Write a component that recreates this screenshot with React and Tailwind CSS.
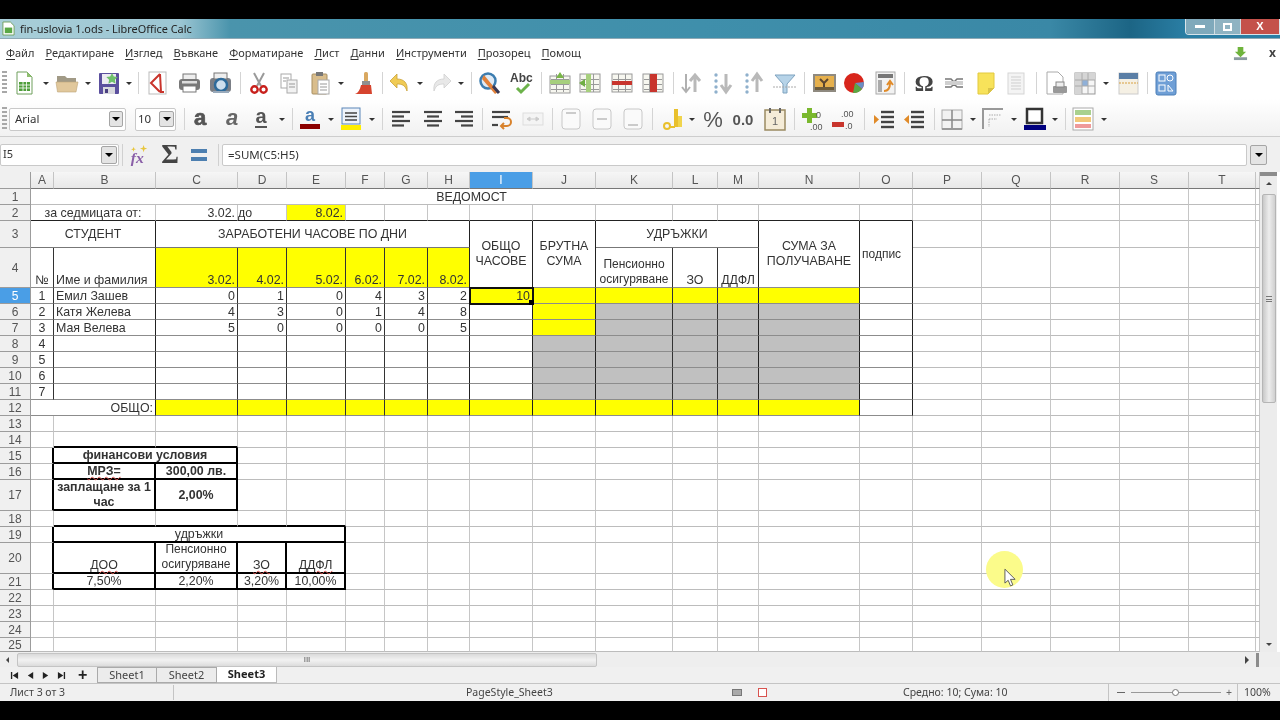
import React from "react";

const gridLines = (stroke = "#9a9a9a") => (
  <path d="M3 8.5h18M3 13.5h18M3 18.5h18M8.5 3v18M15.5 3v18" stroke={stroke} strokeWidth="1" fill="none" />
);

const lines = (ys, x1, x2, color = "#444", w = 2.2) => (
  <>
    {ys.map((y, i) => (
      <line key={i} x1={x1[i] ?? x1[0]} x2={x2[i] ?? x2[0]} y1={y} y2={y} stroke={color} strokeWidth={w} />
    ))}
  </>
);

const icons = {
  doc: (
    <>
      <path d="M5 1h10l5 5v17H5z" fill="#fff" stroke="#6f9f5d" />
      <path d="M15 1v5h5z" fill="#8fbf6f" />
      <rect x="7" y="11" width="11" height="9" fill="#4f9e3a" />
      <path d="M7 14h11M7 17h11M11 11v9M14.5 11v9" stroke="#fff" strokeWidth=".8" />
    </>
  ),
  open: (
    <>
      <path d="M2 5h8l2 2h9v5H2z" fill="#a19a86" />
      <path d="M1 11h22l-2 10H2.500z" fill="#e1c89c" stroke="#bda578" strokeWidth=".6" />
    </>
  ),
  save: (
    <>
      <rect x="3" y="2" width="20" height="21" rx="1" fill="#5b4f9e" />
      <rect x="6" y="3" width="14" height="10" fill="#eceaf2" />
      <path d="M16 2l1.800 3.600 3.900.5-2.800 2.700.7 3.900-3.600-1.900-3.600 1.900.7-3.900-2.800-2.700 3.900-.5z" fill="#6fc16b" />
      <rect x="7" y="16" width="12" height="7" fill="#d8d8de" />
      <rect x="9" y="18" width="3" height="4" fill="#4a4080" />
    </>
  ),
  pdf: (
    <>
      <rect x="4" y="1" width="17" height="22" fill="#fff" stroke="#bbb" />
      <path d="M15 3L6 12l9 9M15 3l1 18M15 21h4" stroke="#c9342c" strokeWidth="2" fill="none" />
    </>
  ),
  print: (
    <>
      <rect x="6" y="3" width="13" height="6" fill="#eee" stroke="#777" />
      <rect x="2" y="8" width="21" height="11" rx="3" fill="#787878" />
      <rect x="5" y="10" width="15" height="2.500" fill="#ddd" />
      <rect x="6" y="15" width="13" height="6" fill="#fff" stroke="#777" />
    </>
  ),
  preview: (
    <>
      <rect x="2" y="7" width="21" height="14" rx="3" fill="#7b7f86" />
      <rect x="6" y="2" width="13" height="6" fill="#eee" stroke="#777" />
      <circle cx="13" cy="14" r="6" fill="#cfe0ee" stroke="#2d6b9b" strokeWidth="2.500" />
      <rect x="5" y="20" width="16" height="2" fill="#9ab" />
    </>
  ),
  cut: (
    <>
      <path d="M7 2l7 13M17 2L10 15" stroke="#9a9a9a" strokeWidth="2" />
      <circle cx="7.500" cy="18.500" r="3.200" fill="none" stroke="#c8201c" strokeWidth="2.400" />
      <circle cx="16.500" cy="18.500" r="3.200" fill="none" stroke="#c8201c" strokeWidth="2.400" />
    </>
  ),
  copy: (
    <>
      <rect x="4" y="3" width="10" height="14" fill="#fff" stroke="#aaa" />
      <rect x="10" y="9" width="10" height="13" fill="#f2f2f2" stroke="#aaa" />
      <path d="M6 7h6M6 10h3M12 13h6M12 16h6" stroke="#999" />
    </>
  ),
  paste: (
    <>
      <rect x="4" y="3" width="15" height="20" rx="1" fill="#d9bd8c" stroke="#a88f62" />
      <rect x="8" y="1" width="7" height="4" fill="#777" />
      <rect x="10" y="9" width="11" height="14" fill="#fff" stroke="#aaa" />
      <path d="M12 13h7M12 16h7M12 19h7" stroke="#999" />
    </>
  ),
  brush: (
    <>
      <rect x="13" y="1" width="4" height="10" rx="1.500" fill="#d9a860" />
      <rect x="11" y="10" width="8" height="4" fill="#8f8f8f" />
      <path d="M10 14h10l1 9H4c3-1 5-4 6-9z" fill="#d6442e" />
    </>
  ),
  undo: (
    <path d="M9 3L2 10l7 7v-4c5 0 8 1 10 7 1-8-3-12-10-12z" fill="#f0cb55" stroke="#c9a23a" strokeWidth=".8" />
  ),
  redo: (
    <path d="M15 3l7 7-7 7v-4c-5 0-8 1-10 7-1-8 3-12 10-12z" fill="#e8e8e8" stroke="#cfcfcf" strokeWidth=".8" />
  ),
  find: (
    <>
      <circle cx="10" cy="10" r="7.500" fill="#dfeaf5" stroke="#3c7db0" strokeWidth="2.500" />
      <path d="M6 4l14 17-3 2L4 8z" fill="#e2813a" />
      <path d="M15 15l6 7" stroke="#3a3a55" strokeWidth="3" />
    </>
  ),
  abc: (
    <>
      <text x="0" y="11" fontSize="12" fontWeight="700" fontFamily="Liberation Sans, sans-serif" fill="#444">Abc</text>
      <path d="M7 17l4 4 8-8" stroke="#6cb24a" strokeWidth="3" fill="none" />
    </>
  ),
  insRow: (
    <>
      <rect x="2" y="5" width="20" height="17" fill="#f7f7f0" stroke="#9a9a9a" />
      {gridLines()}
      <path d="M8 7l4-6 4 6z" fill="#7ab648" />
      <rect x="2" y="9" width="20" height="4" fill="#a6cf7c" />
    </>
  ),
  insCol: (
    <>
      <rect x="2" y="3" width="20" height="18" fill="#f7f7f0" stroke="#9a9a9a" />
      {gridLines()}
      <rect x="8" y="3" width="5" height="18" fill="#a6cf7c" />
      <path d="M1 12l6-4v8z" fill="#6fae44" />
    </>
  ),
  delRow: (
    <>
      <rect x="2" y="3" width="20" height="18" fill="#f7f7f0" stroke="#9a9a9a" />
      {gridLines()}
      <rect x="2" y="10" width="20" height="4" fill="#c8352d" />
    </>
  ),
  delCol: (
    <>
      <rect x="2" y="3" width="20" height="18" fill="#f7f7f0" stroke="#9a9a9a" />
      {gridLines()}
      <rect x="9" y="3" width="7" height="18" fill="#c8352d" />
    </>
  ),
  sort: (
    <>
      <path d="M7 3v17M3 16l4 5 4-5" stroke="#b0b0b0" strokeWidth="2" fill="none" />
      <path d="M16 21V5M11 10l5-6 5 6" stroke="#b9b9b9" strokeWidth="3" fill="none" />
    </>
  ),
  sortDesc: (
    <>
      <circle cx="5" cy="4" r="1.700" fill="#8fb0cc" />
      <circle cx="5" cy="10" r="1.700" fill="#8fb0cc" />
      <circle cx="5" cy="16" r="1.700" fill="#8fb0cc" />
      <circle cx="5" cy="21" r="1.700" fill="#8fb0cc" />
      <path d="M15 3v16M10 14l5 7 5-7" stroke="#b9b9b9" strokeWidth="3" fill="none" />
    </>
  ),
  sortAsc: (
    <>
      <circle cx="5" cy="4" r="1.700" fill="#8fb0cc" />
      <circle cx="5" cy="10" r="1.700" fill="#8fb0cc" />
      <circle cx="5" cy="16" r="1.700" fill="#8fb0cc" />
      <circle cx="5" cy="21" r="1.700" fill="#8fb0cc" />
      <path d="M15 21V5M10 10l5-7 5 7" stroke="#b9b9b9" strokeWidth="3" fill="none" />
    </>
  ),
  filter: (
    <>
      <path d="M2 4h20l-8 9v9h-4v-9z" fill="#b6d3e8" stroke="#7fa3bf" />
      <path d="M0 16h24" stroke="#aaa" strokeDasharray="2 1" />
    </>
  ),
  image: (
    <>
      <rect x="1" y="3" width="23" height="18" fill="#8f8a80" />
      <rect x="3" y="5" width="19" height="14" fill="#e6b04c" />
      <path d="M12 19v-7l-4-4M12 12l4-4" stroke="#5b4630" strokeWidth="2" fill="none" />
      <rect x="3" y="16" width="19" height="3" fill="#6e5c3a" />
    </>
  ),
  chart: (
    <>
      <circle cx="12" cy="12" r="10" fill="#d8261c" />
      <path d="M13 12l9-1a10 10 0 0 1-2 7z" fill="#6b8fc4" />
      <path d="M13 12l7 6a10 10 0 0 1-9 4z" fill="#5aa845" />
    </>
  ),
  pivot: (
    <>
      <rect x="3" y="1" width="19" height="22" fill="#f2f2f2" stroke="#aaa" />
      <rect x="5" y="3" width="15" height="4" fill="#777" />
      <rect x="5" y="9" width="4" height="12" fill="#aaa" />
      <path d="M11 20c4 0 6-3 6-8M14 14l3-4 3 4" stroke="#e08a28" strokeWidth="2" fill="none" />
    </>
  ),
  omega: (
    <text x="12" y="20" textAnchor="middle" fontSize="24" fontWeight="700" fontFamily="Liberation Serif, serif" fill="#444">Ω</text>
  ),
  link: (
    <>
      <path d="M3 8h6l3 3 3-3h6M3 16h6l3-3 3 3h6" stroke="#777" strokeWidth="1.500" fill="none" />
      <rect x="3" y="10" width="18" height="4" fill="#cfcfcf" />
    </>
  ),
  note: (
    <>
      <path d="M4 2h16v15l-6 6H4z" fill="#f7e25a" stroke="#e2c93f" />
      <path d="M14 23v-6h6z" fill="#d8c34a" />
    </>
  ),
  header: (
    <>
      <rect x="4" y="2" width="16" height="21" fill="#f4f4f4" stroke="#d5d5d5" />
      <path d="M7 6h10M7 9h10M7 12h10M7 15h10M7 18h10" stroke="#cfcfcf" />
    </>
  ),
  printPage: (
    <>
      <path d="M3 1h11l5 5v17H3z" fill="#fff" stroke="#aaa" />
      <rect x="9" y="15" width="14" height="7" rx="1" fill="#999" />
      <rect x="12" y="11" width="8" height="5" fill="#eee" stroke="#888" />
    </>
  ),
  freeze: (
    <>
      <rect x="2" y="2" width="20" height="21" fill="#f6f6f6" stroke="#999" />
      <rect x="2" y="2" width="7" height="21" fill="#d5d5d5" />
      <rect x="2" y="2" width="20" height="7" fill="#d5d5d5" />
      <rect x="9" y="9" width="6" height="6" fill="#8fb0d8" />
      <path d="M9 2v21M15 2v21M2 9h20M2 15h20" stroke="#aaa" />
    </>
  ),
  hdrBar: (
    <>
      <rect x="3" y="2" width="19" height="21" fill="#f5f0e4" stroke="#ccc" />
      <rect x="3" y="2" width="19" height="6" fill="#5b7fa6" />
      <path d="M3 12h19" stroke="#d8a040" strokeDasharray="2 1" />
    </>
  ),
  sidebar: (
    <>
      <rect x="2" y="1" width="20" height="23" rx="2" fill="#6f9fd6" stroke="#4c7fb8" />
      <rect x="5" y="4" width="6" height="6" fill="none" stroke="#fff" />
      <circle cx="16" cy="7" r="3" fill="none" stroke="#fff" />
      <rect x="5" y="14" width="6" height="6" fill="none" stroke="#fff" />
      <path d="M14 14l5 6h-5z" fill="none" stroke="#fff" />
    </>
  ),
  bold: (
    <text x="12" y="18" textAnchor="middle" fontSize="22" fontWeight="700" fontFamily="Liberation Sans, sans-serif" fill="#555" stroke="#555" strokeWidth=".7">a</text>
  ),
  italic: (
    <text x="12" y="18" textAnchor="middle" fontSize="22" fontWeight="700" fontStyle="italic" fontFamily="Liberation Sans, sans-serif" fill="#666">a</text>
  ),
  underline: (
    <>
      <text x="12" y="16" textAnchor="middle" fontSize="20" fontWeight="700" fontFamily="Liberation Sans, sans-serif" fill="#555">a</text>
      <rect x="6" y="19" width="12" height="2" fill="#555" />
    </>
  ),
  fontColor: (
    <>
      <text x="12" y="14" textAnchor="middle" fontSize="18" fontWeight="700" fontFamily="Liberation Sans, sans-serif" fill="#4a7fb5">a</text>
      <rect x="2" y="17" width="20" height="5" fill="#8b0000" />
    </>
  ),
  bgColor: (
    <>
      <rect x="3" y="1" width="18" height="16" fill="#eef3fa" stroke="#5a86b8" />
      <path d="M6 6h12M6 9.500h12M6 13h12" stroke="#444" strokeWidth="1.500" />
      <rect x="2" y="18" width="20" height="5" fill="#ffee00" />
    </>
  ),
  alignL: lines([5, 9.500, 14, 18.500], [3], [21, 15, 21, 15]),
  alignC: lines([5, 9.500, 14, 18.500], [3, 6, 3, 6], [21, 18, 21, 18]),
  alignR: lines([5, 9.500, 14, 18.500], [3, 9, 3, 9], [21]),
  wrap: (
    <>
      {lines([5, 10, 18], [3], [21, 19, 9])}
      <path d="M15 11h3a3.500 3.500 0 0 1 0 8h-5M15 16l-3 3 3 3" stroke="#d8822c" strokeWidth="2" fill="none" />
    </>
  ),
  merge: (
    <>
      <rect x="2" y="6" width="20" height="12" fill="#f4f4f4" stroke="#ddd" />
      <path d="M8 12h8M6 12l3-2v4zM18 12l-3-2v4z" stroke="#ccc" fill="#ccc" />
    </>
  ),
  vTop: (
    <>
      <rect x="3" y="2" width="18" height="20" rx="3" fill="#fafafa" stroke="#c8c8c8" />
      <path d="M7 6h10" stroke="#bbb" strokeWidth="1.500" />
    </>
  ),
  vMid: (
    <>
      <rect x="3" y="2" width="18" height="20" rx="3" fill="#fafafa" stroke="#c8c8c8" />
      <path d="M7 12h10" stroke="#bbb" strokeWidth="1.500" />
    </>
  ),
  vBot: (
    <>
      <rect x="3" y="2" width="18" height="20" rx="3" fill="#fafafa" stroke="#c8c8c8" />
      <path d="M7 18h10" stroke="#bbb" strokeWidth="1.500" />
    </>
  ),
  currency: (
    <>
      <rect x="13" y="2" width="4" height="18" fill="#e9c02c" />
      <rect x="17" y="9" width="4" height="11" fill="#f0d44c" />
      <circle cx="6" cy="19" r="3" fill="none" stroke="#e9c02c" strokeWidth="2" />
      <path d="M8 20h6" stroke="#e9c02c" strokeWidth="2" />
    </>
  ),
  pct: (
    <text x="12" y="20" textAnchor="middle" fontSize="22" fontFamily="Liberation Sans, sans-serif" fill="#555">%</text>
  ),
  num: (
    <text x="12" y="18" textAnchor="middle" fontSize="15" fontWeight="700" fontFamily="Liberation Sans, sans-serif" fill="#555">0.0</text>
  ),
  date: (
    <>
      <rect x="2" y="3" width="20" height="20" fill="#f5ecd8" stroke="#9a8a62" strokeWidth="1.500" />
      <rect x="6" y="1" width="2" height="5" fill="#666" />
      <rect x="16" y="1" width="2" height="5" fill="#666" />
      <text x="12" y="18" textAnchor="middle" fontSize="11" fontFamily="Liberation Sans, sans-serif" fill="#666">1</text>
    </>
  ),
  addDec: (
    <>
      <path d="M6 1h5v5h5v5h-5v5H6v-5H1V6h5z" fill="#7ab82e" />
      <text x="15" y="11" fontSize="9" fontFamily="Liberation Sans, sans-serif" fill="#555">0</text>
      <text x="9" y="23" fontSize="9" fontFamily="Liberation Sans, sans-serif" fill="#555">.00</text>
    </>
  ),
  delDec: (
    <>
      <text x="10" y="10" fontSize="9" fontFamily="Liberation Sans, sans-serif" fill="#555">.00</text>
      <rect x="1" y="15" width="12" height="5" fill="#c8352d" />
      <text x="14" y="22" fontSize="9" fontFamily="Liberation Sans, sans-serif" fill="#555">.0</text>
    </>
  ),
  indent: (
    <>
      {lines([5, 10, 15, 20], [9], [22], "#444", 2.400)}
      <path d="M2 8l5 4.500L2 17z" fill="#e08a28" />
    </>
  ),
  outdent: (
    <>
      {lines([5, 10, 15, 20], [9], [22], "#444", 2.400)}
      <path d="M7 8l-5 4.500L7 17z" fill="#e08a28" />
    </>
  ),
  borders: (
    <>
      <rect x="2" y="3" width="20" height="19" fill="#f2f2f2" stroke="#aaa" />
      <path d="M12 3v19M2 13h20" stroke="#888" strokeWidth="1.500" />
      <path d="M2 22h20" stroke="#999" strokeWidth="2" />
    </>
  ),
  bStyle: (
    <>
      <path d="M2 22V2h20" stroke="#999" strokeWidth="2" fill="none" />
      <path d="M8 8h12M8 12h8M8 12v8" stroke="#aaa" strokeDasharray="1.500 1" fill="none" />
    </>
  ),
  bColor: (
    <>
      <rect x="4" y="2" width="15" height="14" fill="#fff" stroke="#333" strokeWidth="2.500" />
      <rect x="1" y="18" width="22" height="5" fill="#00007f" />
    </>
  ),
  cond: (
    <>
      <rect x="2" y="1" width="20" height="22" fill="#fff" stroke="#aaa" />
      <rect x="4" y="3" width="16" height="5" fill="#a9d18e" />
      <rect x="4" y="10" width="16" height="5" fill="#f2c879" />
      <rect x="4" y="17" width="16" height="4" fill="#ef9a9a" />
    </>
  ),
};

const ML = {
  2: "ml-[2px]",
  3: "ml-[3px]",
  4: "ml-[4px]",
  5: "ml-[5px]",
  6: "ml-[6px]",
  7: "ml-[7px]",
  8: "ml-[8px]",
  9: "ml-[9px]",
};

const ROW1 = [
  ["doc", 5], ["^", 7], ["open", 6], ["^", 6], ["save", 5], ["^", 6], ["|", 6],
  ["pdf", 6], ["print", 8], ["preview", 7], ["|", 8], ["cut", 6], ["copy", 6], ["paste", 7], ["^", 6], ["brush", 7], ["|", 7],
  ["undo", 5], ["^", 5], ["redo", 6], ["^", 5], ["|", 7], ["find", 6], ["abc", 8], ["|", 7],
  ["insRow", 6], ["insCol", 6], ["delRow", 8], ["delCol", 7], ["|", 8],
  ["sort", 5], ["sortDesc", 8], ["sortAsc", 7], ["filter", 7], ["|", 7],
  ["image", 7], ["chart", 6], ["pivot", 7], ["|", 7], ["omega", 7], ["link", 6], ["note", 8], ["header", 6], ["|", 8],
  ["printPage", 7], ["freeze", 5], ["^", 6], ["hdrBar", 7], ["|", 7], ["sidebar", 6],
];

const ROW2 = [
  ["|", 8], ["bold", 3], ["italic", 8], ["underline", 5], ["^", 6], ["|", 7],
  ["fontColor", 5], ["^", 6], ["bgColor", 5], ["^", 6], ["|", 7],
  ["alignL", 6], ["alignC", 8], ["alignR", 7], ["|", 6], ["wrap", 6], ["merge", 8], ["|", 7],
  ["vTop", 6], ["vMid", 7], ["vBot", 7], ["|", 7],
  ["currency", 8], ["^", 4], ["pct", 6], ["num", 6], ["date", 8], ["|", 7],
  ["addDec", 6], ["delDec", 6], ["|", 9], ["indent", 7], ["outdent", 6], ["|", 8],
  ["borders", 5], ["^", 6], ["bStyle", 5], ["^", 6], ["bColor", 6], ["^", 5], ["|", 7], ["cond", 5], ["^", 6],
];

const Icon = ({ name, className = "" }) => (
  <svg viewBox="0 0 24 24" className={`w-6 h-6 shrink-0 overflow-visible ${className}`}>
    {icons[name]}
  </svg>
);

const ToolItems = ({ items }) =>
  items.map(([name, ml], i) => {
    if (name === "^") {
      return <span key={i} className={`${ML[ml]} w-[6px] h-[3px] shrink-0 border-x-[3px] border-t-[3px] border-x-transparent border-t-[#333]`} />;
    }
    if (name === "|") {
      return <span key={i} className={`${ML[ml]} w-px h-[22px] shrink-0 bg-[#d4d4d4]`} />;
    }
    return <Icon key={i} name={name} className={ML[ml]} />;
  });

const Grip = () => (
  <span className="ml-[2px] w-[5px] h-[24px] shrink-0 bg-[repeating-linear-gradient(to_bottom,#a8a8a8_0,#a8a8a8_2px,transparent_2px,transparent_4px)]" />
);

const DropBtn = ({ className = "" }) => (
  <span className={`flex items-center justify-center rounded-[2px] border border-[#a5a5a5] bg-[#e4e4e4] ${className}`}>
    <span className="w-0 h-0 border-x-[4px] border-t-[4px] border-x-transparent border-t-black" />
  </span>
);

const menus = ["Файл", "Редактиране", "Изглед", "Въвкане", "Форматиране", "Лист", "Данни", "Инструменти", "Прозорец", "Помощ"];

const COLS = "ABCDEFGHIJKLMNOPQRST ".split("");

const Y = "bg-[#ffff00]";
const G = "bg-[#c0c0c0]";
const R = "justify-end pr-[2px]";
const C = "justify-center";
const L = "justify-start pl-[2px]";
const Small = "text-[12px]";

const cells = {
  A1: { t: "ВЕДОМОСТ", cs: 15, c: C },
  A2: { t: "за седмицата от:", cs: 2, c: C },
  C2: { t: "3.02.", c: R },
  D2: { t: "до", c: "justify-start" },
  E2: { t: "8.02.", c: `${R} ${Y}` },
  A3: { t: "СТУДЕНТ", cs: 2, c: C, mid: true },
  C3: { t: "ЗАРАБОТЕНИ ЧАСОВЕ ПО ДНИ", cs: 6, c: C, mid: true },
  I3: { t: "ОБЩО\nЧАСОВЕ", rs: 2, c: `${C} leading-[15px]`, mid: true },
  J3: { t: "БРУТНА\nСУМА", rs: 2, c: `${C} leading-[15px]`, mid: true },
  K3: { t: "УДРЪЖКИ", cs: 3, c: C, mid: true },
  N3: { t: "СУМА ЗА\nПОЛУЧАВАНЕ", rs: 2, c: `${C} leading-[15px]`, mid: true },
  O3: { t: "подпис", rs: 2, c: `${L} ${Small}`, mid: true },
  A4: { t: "№", c: C },
  B4: { t: "Име и фамилия", c: L },
  C4: { t: "3.02.", c: `${R} ${Y}` },
  D4: { t: "4.02.", c: `${R} ${Y}` },
  E4: { t: "5.02.", c: `${R} ${Y}` },
  F4: { t: "6.02.", c: `${R} ${Y}` },
  G4: { t: "7.02.", c: `${R} ${Y}` },
  H4: { t: "8.02.", c: `${R} ${Y}` },
  K4: { t: "Пенсионно\nосигуряване", c: `${C} ${Small} leading-[15px]` },
  L4: { t: "ЗО", c: C },
  M4: { t: "ДДФЛ", c: C },
  I5: { t: "10", c: `${R} ${Y} outline-2 -outline-offset-1 outline-[#111] relative`, handle: true },
  A12: { t: "ОБЩО:", cs: 2, c: R },
  B15: { t: "финансови условия", cs: 2, c: `${C} font-bold` },
  B16: { t: "МРЗ=", c: `${C} font-bold`, wavy: true },
  C16: { t: "300,00 лв.", c: `${C} font-bold` },
  B17: { t: "заплащане за 1\nчас", c: `${C} font-bold leading-[15px]`, mid: true },
  C17: { t: "2,00%", c: `${C} font-bold`, mid: true },
  B19: { t: "удръжки", cs: 4, c: C },
  B20: { t: "ДОО", c: C, wavy: true },
  C20: { t: "Пенсионно\nосигуряване", c: `${C} ${Small} leading-[15px]` },
  D20: { t: "ЗО", c: C, wavy: true },
  E20: { t: "ДДФЛ", c: C, wavy: true },
  B21: { t: "7,50%", c: C },
  C21: { t: "2,20%", c: C },
  D21: { t: "3,20%", c: C },
  E21: { t: "10,00%", c: C },
};

const names = ["Емил Зашев", "Катя Желева", "Мая Велева"];
const hours = [
  [0, 1, 0, 4, 3, 2],
  [4, 3, 0, 1, 4, 8],
  [5, 0, 0, 0, 0, 5],
];
[1, 2, 3, 4, 5, 6, 7].forEach((n) => {
  cells[`A${n + 4}`] = { t: String(n), c: C };
});
names.forEach((n, i) => {
  cells[`B${i + 5}`] = { t: n, c: L };
  hours[i].forEach((h, j) => {
    cells[`${COLS[2 + j]}${i + 5}`] = { t: String(h), c: R };
  });
});

const fill = (col, row) => {
  const ci = COLS.indexOf(col);
  if (row === 12 && ci >= 2 && ci <= 13) return Y;
  if (row === 5 && ci >= 9 && ci <= 13) return Y;
  if ((row === 6 || row === 7) && col === "J") return Y;
  if (row >= 6 && row <= 11 && ci >= 10 && ci <= 13) return G;
  if (row >= 8 && row <= 11 && col === "J") return G;
  return "";
};

const inT1 = (ci, r) => ci >= 1 && ci <= 2 && r >= 15 && r <= 17;
const inT2 = (ci, r) => ci >= 1 && ci <= 4 && r >= 19 && r <= 21;

const rightLine = (ci, r) => {
  // thick frames of the two small tables
  if (inT1(ci, r) || inT1(ci + 1, r) || inT2(ci, r) || inT2(ci + 1, r)) return "border-r-2 border-r-black";
  if (r >= 3 && r <= 12 && ci <= 14) {
    if ([1, 7, 8, 9, 12, 13, 14].includes(ci)) return "border-r border-r-[#222]";
    if (r >= 4) return "border-r border-r-[#333]";
  }
  return "border-r border-r-[#c6c6c6]";
};

const bottomLine = (ci, r) => {
  if (inT1(ci, r) || inT1(ci, r + 1) || inT2(ci, r) || inT2(ci, r + 1)) return "border-b-2 border-b-black";
  if (r === 2 && ci <= 14) return "border-b border-b-[#222]";
  if (r === 3 && ci <= 12) return "border-b border-b-[#777]";
  if (r >= 4 && r <= 12 && ci <= 14) return "border-b border-b-[#8c8c8c]";
  return "border-b border-b-[#bcbcbc]";
};

const COL_SPAN = { 2: "col-span-2", 3: "col-span-3", 4: "col-span-4", 6: "col-span-6", 15: "col-span-15" };

const sheetCells = () => {
  const covered = new Set();
  const out = [];
  for (let r = 1; r <= 25; r++) {
    const sel = r === 5;
    out.push(
      <div
        key={`h${r}`}
        className={`flex items-center justify-center border-r border-b border-[#9c9c9c] text-[12px] ${sel ? "bg-[#4a9ee6] text-white" : "bg-[#f0f0f0] text-[#555]"}`}
      >
        {r}
      </div>
    );
    COLS.forEach((col, ci) => {
      const key = `${col}${r}`;
      if (covered.has(key)) return;
      const cell = cells[key] || {};
      const cs = cell.cs || 1;
      const rs = cell.rs || 1;
      for (let i = 0; i < cs; i++) {
        for (let j = 0; j < rs; j++) {
          if (i || j) covered.add(`${COLS[ci + i]}${r + j}`);
        }
      }
      out.push(
        <div
          key={key}
          className={`flex ${cell.mid ? "items-center" : "items-end"} overflow-visible whitespace-pre-line text-center leading-[14px] ${cs > 1 ? COL_SPAN[cs] : ""} ${rs > 1 ? "row-span-2" : ""} ${rightLine(ci + cs - 1, r)} ${bottomLine(ci, r + rs - 1)} ${fill(col, r)} ${cell.c || ""}`}
        >
          {cell.wavy ? <span className="underline decoration-wavy decoration-[#d9534f] decoration-1">{cell.t}</span> : cell.t}
          {cell.handle && <span className="absolute -right-[2px] -bottom-[2px] w-[5px] h-[5px] bg-black" />}
        </div>
      );
    });
  }
  return out;
};

export default function App() {
  return (
    <div className="relative w-[1280px] h-[720px] overflow-hidden bg-black blur-[0.35px] font-['Liberation_Sans',sans-serif] text-[12.4px] text-[#333]">
      <div className="h-[19px] bg-black" />

      {/* title bar */}
      <div className="h-[20px] flex items-center justify-between border-b border-[#8fa9b5] bg-[linear-gradient(to_right,#a8ced8_0,#9cc6d3_180px,#4a94ac_230px,#3f8fab_700px,#3a88a6_1050px,#1c6585_1130px,#2a7ea4_1185px)]">
        <div className="flex items-center font-['Noto_Sans',sans-serif] text-[10.9px] text-[#222]">
          <svg viewBox="0 0 14 16" className="ml-[2px] w-[13px] h-[15px]">
            <path d="M1 1h8l4 4v10H1z" fill="#fff" stroke="#6f9f5d" />
            <rect x="3" y="7" width="8" height="6" fill="#5aa845" />
          </svg>
          <span className="ml-[5px] pt-[1px]">fin-uslovia 1.ods - LibreOffice Calc</span>
        </div>
        <div className="flex h-[16px] self-start w-[95px] rounded-bl-[4px] border-x border-b border-[#d8e4ea] overflow-hidden">
          <div className="w-[28px] flex items-center justify-center bg-[#7fa9bb]">
            <span className="w-[10px] h-[3px] bg-white" />
          </div>
          <div className="w-[27px] flex items-center justify-center bg-[#8fb3c2] border-x border-[#cfdde3]">
            <span className="w-[9px] h-[8px] border-2 border-white" />
          </div>
          <div className="flex-1 flex items-center justify-center bg-[#c4514a] text-white font-bold text-[11px]">X</div>
        </div>
      </div>

      {/* menu */}
      <div className="h-[28px] flex items-center justify-between bg-white font-['Noto_Sans',sans-serif] text-[11px] text-[#333]">
        <div className="flex items-center gap-[11px] pl-[6px]">
          {menus.map((m) => (
            <span key={m}>
              <span className="underline underline-offset-2">{m[0]}</span>
              {m.slice(1)}
            </span>
          ))}
        </div>
        <div className="flex items-center gap-[21px] pr-[4px]">
          <svg viewBox="0 0 16 16" className="w-[15px] h-[15px]">
            <path d="M5 1h6v5h3l-6 6-6-6h3z" fill="#6fb43c" />
            <rect x="1" y="12" width="14" height="3" fill="#8a9aa0" />
          </svg>
          <span className="font-bold text-[12px] text-[#444]">x</span>
        </div>
      </div>

      {/* toolbars */}
      <div className="h-[32px] flex items-center bg-white">
        <Grip />
        <ToolItems items={ROW1} />
      </div>
      <div className="h-[38px] pt-[3px] flex items-center border-b border-[#cdcdcd] bg-[linear-gradient(to_bottom,#ffffff,#f1f1f1)]">
        <Grip />
        <div className="ml-[2px] w-[117px] h-[23px] flex items-center justify-between bg-white border border-[#c9c9c9] rounded-[2px] pl-[5px] pr-[2px] font-['Noto_Sans',sans-serif] text-[11.5px] shrink-0">
          Arial
          <DropBtn className="w-[14px] h-[16px]" />
        </div>
        <div className="ml-[9px] w-[41px] h-[23px] flex items-center justify-between bg-white border border-[#c9c9c9] rounded-[2px] pl-[2px] pr-[1px] font-['Noto_Sans',sans-serif] text-[11.5px] shrink-0">
          10
          <DropBtn className="w-[15px] h-[16px]" />
        </div>
        <ToolItems items={ROW2} />
      </div>

      {/* formula bar */}
      <div className="h-[35px] flex items-center bg-[#f0f0f0]">
        <div className="w-[119px] h-[22px] flex items-center justify-between bg-white border border-[#c9c9c9] rounded-[2px] pl-[2px] pr-[1px] font-['Noto_Sans',sans-serif] text-[11px] shrink-0">
          I5
          <DropBtn className="w-[16px] h-[18px]" />
        </div>
        <span className="ml-[3px] w-px h-[22px] bg-[#d0d0d0]" />
        <svg viewBox="0 0 24 24" className="ml-[5px] w-[22px] h-[22px] shrink-0 overflow-visible">
          <path d="M17 1l1 3 3 1-3 1-1 3-1-3-3-1 3-1zM6 3l.7 2 2 .7-2 .7L6 8.500l-.7-2-2-.7 2-.7z" fill="#e8c63c" />
          <text x="3" y="21" fontSize="17" fontStyle="italic" fontWeight="700" fontFamily="Liberation Serif, serif" fill="#8a5fa8">fx</text>
        </svg>
        <span className="ml-[9px] w-[22px] text-center font-['Liberation_Serif',serif] font-bold text-[27px] leading-none text-[#444]">Σ</span>
        <span className="ml-[10px] w-[16px] h-[12px] shrink-0 border-y-[4px] border-[#4d7fb0]" />
        <span className="ml-[11px] w-px h-[22px] bg-[#d0d0d0]" />
        <div className="ml-[3px] w-[1025px] h-[22px] flex items-center bg-white border border-[#c9c9c9] rounded-[2px] pl-[5px] font-['Noto_Sans',sans-serif] text-[11.5px]">
          =SUM(C5:H5)
        </div>
        <DropBtn className="ml-[3px] w-[17px] h-[20px]" />
      </div>

      {/* sheet */}
      <div className="relative h-[480px] flex bg-white">
        <div className="w-[1260px] h-[480px] overflow-hidden grid grid-cols-[31px_23px_102px_82px_49px_59px_39px_43px_42px_63px_63px_77px_45px_41px_101px_53px_69px_69px_69px_69px_67px_4px] grid-rows-[17px_16px_16px_27px_40px_repeat(12,16px)_31px_16px_16px_31px_repeat(4,16px)_14px]">
          <div className="border-r border-b border-[#9c9c9c] bg-[#f0f0f0]" />
          {COLS.map((col, i) => (
            <div
              key={i}
              className={`flex items-center justify-center border-r border-b border-b-[#777] border-r-[#c4c4c4] text-[12px] ${col === "I" ? "bg-[#4a9ee6] text-white" : "bg-[linear-gradient(to_bottom,#f6f6f6,#e8e8e8)] text-[#555]"}`}
            >
              {col}
            </div>
          ))}
          {sheetCells()}
        </div>

        {/* vertical scrollbar */}
        <div className="w-[17px] flex flex-col items-center bg-[#ececec]">
          <span className="w-full h-[4px] bg-[#8c8c8c]" />
          <span className="h-[14px] flex items-center justify-center">
            <span className="w-0 h-0 border-x-[3px] border-b-[3px] border-x-transparent border-b-[#444]" />
          </span>
          <div className="mt-[4px] w-[14px] h-[209px] flex items-center justify-center rounded-[2px] border border-[#b5b5b5] bg-[linear-gradient(to_right,#c8c8c8,#ededed,#d0d0d0)]">
            <span className="w-[6px] h-[6px] border-y border-[#777] bg-[linear-gradient(to_bottom,transparent_2px,#777_2px,#777_3px,transparent_3px)]" />
          </div>
          <span className="mt-auto mb-[6px] w-0 h-0 border-x-[3px] border-t-[3px] border-x-transparent border-t-[#444]" />
        </div>
        <div className="flex-1 bg-white" />

        {/* mouse pointer highlight */}
        <div className="absolute left-[986px] top-[379px] w-[37px] h-[37px] rounded-full bg-[#fbfb8a]" />
        <svg viewBox="0 0 14 20" className="absolute left-[1004px] top-[396px] w-[13px] h-[19px]">
          <path d="M1 1v15l3.500-3 2.500 6 2.500-1-2.500-6h5z" fill="#fff" stroke="#555" strokeWidth="1" />
        </svg>
      </div>

      {/* horizontal scrollbar */}
      <div className="h-[15px] flex items-center bg-[#eeeeee]">
        <span className="ml-[6px] w-0 h-0 border-y-[3px] border-r-[3px] border-y-transparent border-r-[#444]" />
        <div className="ml-[8px] w-[580px] h-[14px] flex items-center justify-center border border-[#c4c4c4] rounded-[2px] bg-[linear-gradient(to_bottom,#dadada,#f2f2f2,#dcdcdc)]">
          <span className="text-[8px] leading-none text-[#555]">III</span>
        </div>
        <span className="ml-[648px] w-0 h-0 border-y-[4px] border-l-[4px] border-y-transparent border-l-[#444]" />
        <span className="ml-[7px] w-[3px] h-[14px] bg-[#8c8c8c]" />
      </div>

      {/* sheet tabs */}
      <div className="h-[16px] flex items-start bg-[#f0f0f0] font-['Noto_Sans',sans-serif] text-[11px]">
        <div className="w-[97px] h-full flex items-center text-[#222]">
          <svg viewBox="0 0 10 10" className="ml-[10px] w-[9px] h-[9px]"><path d="M1 1h1.500v8H1zM9 1v8L3 5z" fill="#222" /></svg>
          <svg viewBox="0 0 10 10" className="ml-[7px] w-[9px] h-[9px]"><path d="M8 1v8L2 5z" fill="#222" /></svg>
          <svg viewBox="0 0 10 10" className="ml-[6px] w-[9px] h-[9px]"><path d="M2 1v8l6-4z" fill="#222" /></svg>
          <svg viewBox="0 0 10 10" className="ml-[7px] w-[9px] h-[9px]"><path d="M7.500 1H9v8H7.500zM1 1v8l6-4z" fill="#222" /></svg>
          <span className="ml-[12px] font-['Liberation_Sans',sans-serif] font-bold text-[16px] leading-none">+</span>
        </div>
        <div className="w-[60px] h-full flex items-center justify-center border border-[#aaa] bg-[#ececec] text-[#444]">Sheet1</div>
        <div className="w-[60px] h-full flex items-center justify-center border-y border-r border-[#aaa] bg-[#ececec] text-[#444]">Sheet2</div>
        <div className="w-[60px] h-full flex items-center justify-center border-r border-b border-[#bbb] bg-white font-bold text-[#222]">Sheet3</div>
      </div>

      {/* status bar */}
      <div className="h-[18px] flex items-center border-t border-[#c4c4c4] bg-[#f0f0f0] font-['Noto_Sans',sans-serif] text-[10.5px] text-[#444]">
        <span className="w-[174px] pl-[10px] border-r border-[#c4c4c4] shrink-0">Лист 3 от 3</span>
        <span className="ml-[292px] w-[100px] shrink-0">PageStyle_Sheet3</span>
        <span className="ml-[166px] w-[10px] h-[7px] border border-[#777] bg-[#aaa] shrink-0" />
        <span className="ml-[16px] w-[9px] h-[9px] border border-[#d9534f] bg-white shrink-0" />
        <span className="ml-[136px] w-[125px] shrink-0">Средно: 10; Сума: 10</span>
        <span className="ml-[80px] w-px h-[17px] bg-[#c4c4c4]" />
        <span className="ml-[8px] w-[8px] h-px bg-[#666]" />
        <span className="relative ml-[6px] w-[90px] h-px bg-[#999]">
          <span className="absolute left-[41px] -top-[3px] w-[7px] h-[7px] rounded-full border border-[#777] bg-white" />
        </span>
        <span className="ml-[5px] text-[#666]">+</span>
        <span className="ml-[5px] w-px h-[17px] bg-[#c4c4c4]" />
        <span className="ml-[6px]">100%</span>
      </div>
    </div>
  );
}
